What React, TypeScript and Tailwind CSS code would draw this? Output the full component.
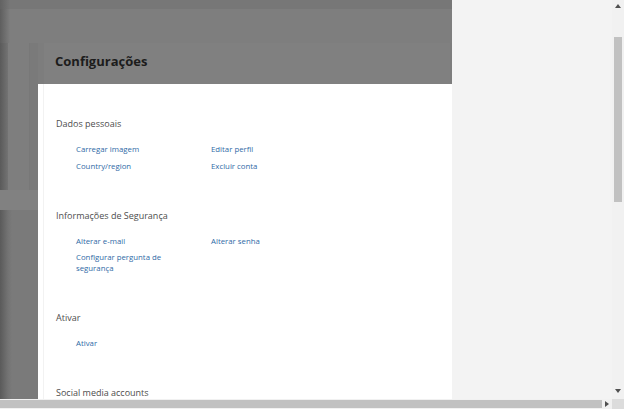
const links = 'block max-w-[110px] text-[7.8px] leading-[11px] text-[#2f6aa6]';

const Section = ({
	title,
	items,
	first,
}: {
	title: string;
	items: string[];
	first?: boolean;
}) => {
	return (
		<section className={first ? '' : 'mt-[37px]'}>
			<h3 className="text-[9px] leading-[14px] text-[#4d4d4d]">{title}</h3>
			<ul className="mt-[13px] ml-[20px] grid grid-cols-[135px_135px] gap-y-[5.5px]">
				{items.map((item) => (
					<li key={item}>
						<a className={links}>{item}</a>
					</li>
				))}
			</ul>
		</section>
	);
};

const Arrow = ({ dir }: { dir: 'up' | 'down' | 'right' }) => {
	const points =
		dir === 'up' ? '0,4 3,0 6,4' : dir === 'down' ? '0,0 6,0 3,4' : '0,0 4,3 0,6';
	return (
		<svg width={dir === 'right' ? 4 : 6} height={dir === 'right' ? 6 : 4} viewBox={dir === 'right' ? '0 0 4 6' : '0 0 6 4'}>
			<polygon points={points} fill="#505050" />
		</svg>
	);
};

export default function App() {
	return (
		<div
			className="w-[624px] h-[409px] flex flex-col overflow-hidden bg-[#f3f3f3]"
			style={{ fontFamily: '"Open Sans", "Noto Sans", sans-serif' }}
		>
			<div className="flex flex-1 min-h-0">
				{/* dimmed page + dialog */}
				<div className="w-[452px] flex flex-col bg-[#7d7d7d]">
					<div className="h-[9px] shrink-0 bg-[linear-gradient(to_right,#626262,#777777_10px)]" />
					<div className="h-[34px] shrink-0 bg-[linear-gradient(to_right,#5e5e5e,#7e7e7e_10px)]" />
					<div className="flex flex-1 min-h-0">
						<aside className="w-[38px] flex flex-col bg-[linear-gradient(to_right,#5a5a5a,#737373_8px,#7a7a7a_12px)]">
							<div className="ml-[8px] w-[22px] h-[147px] shrink-0 bg-[#7e7e7e] border-r border-[#787878]" />
							<div className="h-[20px] shrink-0 bg-[#818181]" />
						</aside>

						<div className="flex-1 flex flex-col min-w-0 min-h-0">
							<header className="h-[41px] shrink-0 pl-[6px] pr-[2px]">
								<div className="h-full flex items-center pl-[11px] pb-[4px] bg-[#808080]">
									<h2 className="text-[13px] font-bold text-[#1c1c1c]">Configurações</h2>
								</div>
							</header>

							<div className="flex-1 min-h-0 overflow-hidden bg-white pt-[33px] pl-[18px] border-l-[5px] border-white shadow-[inset_1px_0_0_#f2f2f2]">
								<div className="-ml-[5px]">
									<Section
										first
										title="Dados pessoais"
										items={['Carregar imagem', 'Editar perfil', 'Country/region', 'Excluir conta']}
									/>
									<Section
										title="Informações de Segurança"
										items={['Alterar e-mail', 'Alterar senha', 'Configurar pergunta de segurança']}
									/>
									<Section title="Ativar" items={['Ativar']} />
									<section className="mt-[37px]">
										<h3 className="text-[9px] leading-[14px] text-[#4d4d4d]">Social media accounts</h3>
									</section>
								</div>
							</div>
						</div>
					</div>
				</div>

				<div className="flex-1 bg-[#f3f3f3]" />

				{/* vertical scrollbar */}
				<div className="w-[12px] flex flex-col items-center bg-[#f1f1f1]">
					<div className="h-[12px] flex items-center justify-center">
						<Arrow dir="up" />
					</div>
					<div className="mt-[25px] w-[8px] h-[165px] bg-[#c1c1c1]" />
					<div className="mt-auto h-[14px] flex items-center justify-center pb-[2px]">
						<Arrow dir="down" />
					</div>
				</div>
			</div>

			{/* horizontal scrollbar */}
			<div className="h-[10px] shrink-0 flex bg-[#f1f1f1]">
				<div className="w-[602px] my-[1px] bg-[#c1c1c1]" />
				<div className="w-[10px] flex items-center justify-center">
					<Arrow dir="right" />
				</div>
				<div className="w-[12px] bg-[#dcdcdc]" />
			</div>
		</div>
	);
}
